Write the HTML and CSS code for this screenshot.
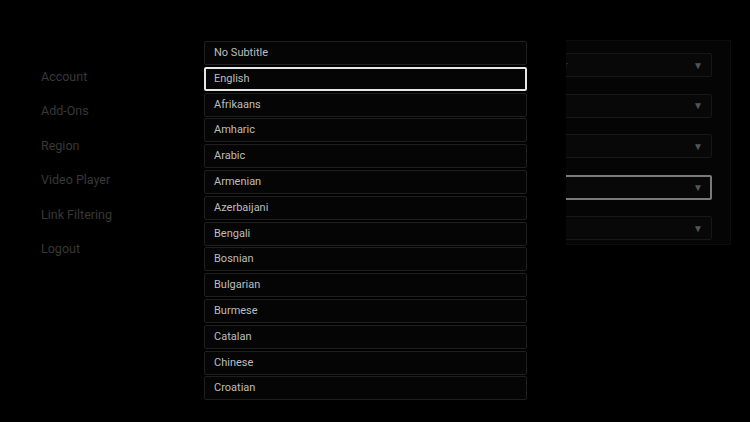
FILE: index.html
```html
<!DOCTYPE html>
<html lang="en">
<head>
    <meta charset="UTF-8">
    <meta name="viewport" content="width=device-width, initial-scale=1.0">
    <title>Settings - Subtitles</title>
    <link rel="stylesheet" href="styles.css">
</head>
<body>
    <div class="screen">
        <!-- Menu lateral -->
        <ul class="menu">
            <li>Account</li>
            <li>Add-Ons</li>
            <li>Region</li>
            <li>Video Player</li>
            <li>Link Filtering</li>
            <li>Logout</li>
        </ul>

        <!-- Painel de opcoes -->
        <div class="panel">
            <div class="dropdown"><span>ExoPlayer</span><span class="arrow">&#9660;</span></div>
            <div class="dropdown"><span>Auto</span><span class="arrow">&#9660;</span></div>
            <div class="dropdown"><span>Off</span><span class="arrow">&#9660;</span></div>
            <div class="dropdown focused"><span>English</span><span class="arrow">&#9660;</span></div>
            <div class="dropdown"><span>Default</span><span class="arrow">&#9660;</span></div>
        </div>

        <!-- Lista de legendas aberta por cima -->
        <div class="overlay">
            <ul class="options">
                <li>No Subtitle</li>
                <li class="selected">English</li>
                <li>Afrikaans</li>
                <li>Amharic</li>
                <li>Arabic</li>
                <li>Armenian</li>
                <li>Azerbaijani</li>
                <li>Bengali</li>
                <li>Bosnian</li>
                <li>Bulgarian</li>
                <li>Burmese</li>
                <li>Catalan</li>
                <li>Chinese</li>
                <li>Croatian</li>
            </ul>
        </div>
    </div>
</body>
</html>
```

FILE: styles.css
```css
body {
    margin: 0;
    background-color: #000;
    font-family: Roboto, "Liberation Sans", Arial, sans-serif;
}
.screen {
    position: relative;
    width: 750px;
    height: 422px;
    overflow: hidden;
    display: flex;
    background-color: #000;
}
.menu {
    list-style: none;
    margin: 0;
    padding: 69px 0 0 41px;
    width: 454px;
    box-sizing: border-box;
    display: flex;
    flex-direction: column;
    gap: 19.4px;
}
.menu li {
    color: #383838;
    font-size: 12.5px;
    line-height: 15px;
}
.panel {
    margin-top: 40px;
    width: 277px;
    height: 205px;
    box-sizing: border-box;
    padding: 12px 18px 0 54px;
    background-color: #050505;
    border: 1px solid #0d0d0d;
    display: flex;
    flex-direction: column;
    gap: 16.5px;
}
.dropdown {
    height: 24px;
    box-sizing: border-box;
    border: 1px solid #171717;
    background-color: #080808;
    border-radius: 2px;
    display: flex;
    align-items: center;
    justify-content: space-between;
    padding: 0 8px 0 10px;
    color: #3a3a3a;
    font-size: 11px;
}
.dropdown.focused {
    height: 25px;
    border: 2px solid #7a7a7a;
    padding-right: 7px;
}
.arrow {
    color: #555;
    font-size: 10px;
}
.overlay {
    position: absolute;
    left: 190px;
    top: 0;
    width: 376px;
    height: 422px;
    background-color: #000;
}
.options {
    list-style: none;
    margin: 0;
    padding: 41px 0 0 14px;
    display: flex;
    flex-direction: column;
    gap: 1.8px;
}
.options li {
    width: 323px;
    height: 24px;
    box-sizing: border-box;
    border: 1px solid #1f1f1f;
    border-radius: 2px;
    background-color: #050505;
    color: #bdbdbd;
    font-size: 11px;
    line-height: 22px;
    padding-left: 9px;
}
.options li.selected {
    border: 2px solid #e6e6e6;
    padding-left: 8px;
    line-height: 20px;
}
```
